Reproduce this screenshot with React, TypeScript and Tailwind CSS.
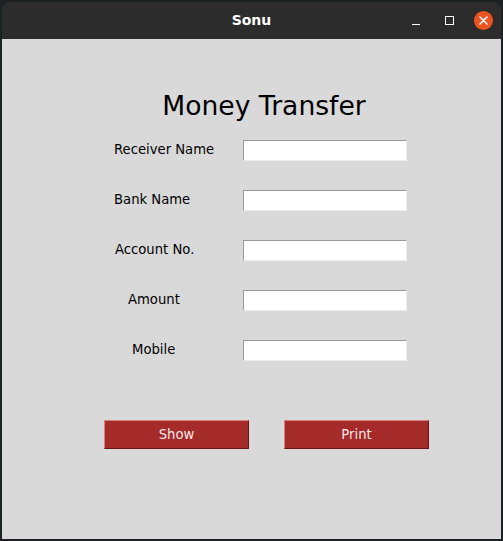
import React from 'react';

// Money transfer form, tk-style window

const fields = [
  { label: 'Receiver Name', pad: 'pl-[112px]' },
  { label: 'Bank Name', pad: 'pl-[112px]' },
  { label: 'Account No.', pad: 'pl-[113px]' },
  { label: 'Amount', pad: 'pl-[126px]' },
  { label: 'Mobile', pad: 'pl-[130px]' },
];

const App: React.FC = () => {
  return (
    <div className="w-[503px] h-[541px] bg-[#1c2224] pt-[2px] pl-[2px] font-['DejaVu_Sans',sans-serif]">
      <div className="w-[499px] h-[537px] flex flex-col">
        {/* Title bar */}
        <div className="h-[37px] bg-[#2c2c2c] rounded-t-[8px] flex items-center relative">
          <div className="flex-1 text-center text-white text-[14px] font-bold">Sonu</div>
          <div className="absolute right-[8px] top-0 h-[37px] flex items-center">
            <div className="w-[8px] h-[1px] bg-white mr-[25px] mt-[8px]" />
            <div className="w-[9px] h-[9px] border border-white mr-[20px]" />
            <div className="w-[19px] h-[19px] rounded-full bg-[#e95420] flex items-center justify-center">
              <svg width="9" height="9" viewBox="0 0 9 9">
                <path d="M1 1L8 8M8 1L1 8" stroke="white" strokeWidth="1.5" strokeLinecap="round" />
              </svg>
            </div>
          </div>
        </div>

        {/* Content */}
        <div className="flex-1 bg-[#d9d9d9] flex flex-col pt-[49px]">
          <div className="h-[36px] leading-[36px] text-center text-[26.6px] text-black pl-[25px]">Money Transfer</div>
          <div className="mt-px flex flex-col">
            {fields.map((f) => (
              <div key={f.label} className="h-[50px] flex items-center">
                <div className={`w-[241px] ${f.pad} text-[13.2px] text-black -mt-px`}>{f.label}</div>
                <input
                  className="w-[164px] h-[21px] bg-white border border-t-[#9a9a9a] border-l-[#9a9a9a] border-b-[#ececec] border-r-[#ececec] outline-none"
                  type="text"
                />
              </div>
            ))}
          </div>
          <div className="mt-[45px] flex pl-[102px] gap-[35px]">
            <button className="w-[145px] h-[29px] bg-[#a52a2a] text-[#f4e6e6] text-[13.2px] border border-t-[#d88080] border-l-[#d88080] border-b-[#6a1515] border-r-[#6a1515]">
              Show
            </button>
            <button className="w-[145px] h-[29px] bg-[#a52a2a] text-[#f4e6e6] text-[13.2px] border border-t-[#d88080] border-l-[#d88080] border-b-[#6a1515] border-r-[#6a1515]">
              Print
            </button>
          </div>
        </div>
      </div>
    </div>
  );
};

export default App;
